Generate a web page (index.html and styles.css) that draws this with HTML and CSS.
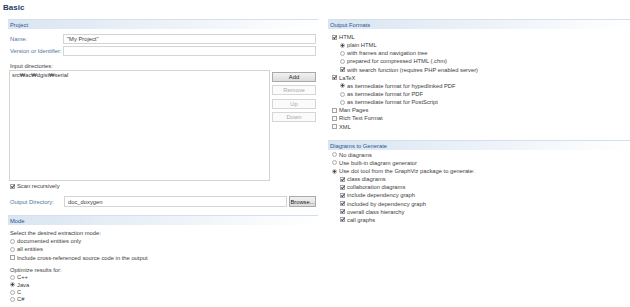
FILE: index.html
```html
<!DOCTYPE html>
<html lang="en">
<head>
    <meta charset="UTF-8">
    <meta name="viewport" content="width=device-width, initial-scale=1.0">
    <title>Doxygen - Basic</title>
    <link rel="stylesheet" href="styles.css">
</head>
<body>
    <h1 class="page-title">Basic</h1>

    <div class="columns">
        <div class="col">
            <section class="group">
                <div class="group-title">Project</div>
                <div class="field first">
                    <label class="field-label">Name:</label>
                    <input class="text-input" type="text" value="&quot;My Project&quot;">
                </div>
                <div class="field">
                    <label class="field-label">Version or Identifier:</label>
                    <input class="text-input" type="text" value="">
                </div>

                <div class="plain-label dirs-label">Input directories:</div>
                <div class="dirs">
                    <div class="dir-list">src₩ac₩dgist₩serial</div>
                    <div class="dir-buttons">
                        <button class="btn">Add</button>
                        <button class="btn" disabled>Remove</button>
                        <button class="btn btn-gap" disabled>Up</button>
                        <button class="btn" disabled>Down</button>
                    </div>
                </div>
                <div class="opt scan"><span class="box on"></span>Scan recursively</div>

                <div class="field out-dir">
                    <label class="field-label">Output Directory:</label>
                    <input class="text-input" type="text" value="doc_doxygen">
                    <button class="btn browse">Browse...</button>
                </div>
            </section>

            <section class="group mode">
                <div class="group-title">Mode</div>
                <div class="opt">Select the desired extraction mode:</div>
                <div class="opt"><span class="radio"></span>documented entities only</div>
                <div class="opt"><span class="radio"></span>all entities</div>
                <div class="opt"><span class="box"></span>Include cross-referenced source code in the output</div>
                <div class="opt optimize">Optimize results for:</div>
                <div class="opt tight"><span class="radio"></span>C++</div>
                <div class="opt tight"><span class="radio on"></span>Java</div>
                <div class="opt tight"><span class="radio"></span>C</div>
                <div class="opt tight"><span class="radio"></span>C#</div>
            </section>
        </div>

        <div class="col">
            <section class="group">
                <div class="group-title">Output Formats</div>
                <div class="list">
                    <div class="opt"><span class="box on"></span>HTML</div>
                    <div class="opt sub"><span class="radio on"></span>plain HTML</div>
                    <div class="opt sub"><span class="radio"></span>with frames and navigation tree</div>
                    <div class="opt sub"><span class="radio"></span>prepared for compressed HTML (.chm)</div>
                    <div class="opt sub"><span class="box on"></span>with search function (requires PHP enabled server)</div>
                    <div class="opt"><span class="box on"></span>LaTeX</div>
                    <div class="opt sub"><span class="radio on"></span>as itermediate format for hypedlinked PDF</div>
                    <div class="opt sub"><span class="radio"></span>as itermediate format for PDF</div>
                    <div class="opt sub"><span class="radio"></span>as itermediate format for PostScript</div>
                    <div class="opt"><span class="box"></span>Man Pages</div>
                    <div class="opt"><span class="box"></span>Rich Text Format</div>
                    <div class="opt"><span class="box"></span>XML</div>
                </div>
            </section>

            <section class="group diagrams">
                <div class="group-title">Diagrams to Generate</div>
                <div class="list">
                    <div class="opt"><span class="radio"></span>No diagrams</div>
                    <div class="opt"><span class="radio"></span>Use built-in diagram generator</div>
                    <div class="opt"><span class="radio on"></span>Use dot tool from the GraphViz package to generate:</div>
                    <div class="opt sub"><span class="box on"></span>class diagrams</div>
                    <div class="opt sub"><span class="box on"></span>collaboration diagrams</div>
                    <div class="opt sub"><span class="box on"></span>include dependency graph</div>
                    <div class="opt sub"><span class="box on"></span>included by dependency graph</div>
                    <div class="opt sub"><span class="box on"></span>overall class hierarchy</div>
                    <div class="opt sub"><span class="box on"></span>call graphs</div>
                </div>
            </section>
        </div>
    </div>
</body>
</html>
```

FILE: styles.css
```css
body {
    margin: 0;
    background: #fff;
    font-family: "Liberation Sans", Arial, sans-serif;
    font-size: 5.8px;
    color: #3c3c3c;
}
.page-title {
    margin: 0;
    height: 19px;
    padding: 3px 0 0 3px;
    box-sizing: border-box;
    font-size: 8px;
    line-height: 10px;
    color: #1f3c66;
}
.columns {
    display: grid;
    grid-template-columns: 310px 302px;
    gap: 10px;
    padding-left: 8px;
}
.group-title {
    height: 9px;
    line-height: 10px;
    padding-left: 2px;
    color: #2a5590;
    border-top: 1px solid #d3dfec;
    background: linear-gradient(to right, #d9e5f1, #eef3f9 55%, #fff);
}
.field {
    display: flex;
    align-items: center;
    margin-top: 2px;
    padding: 0 2px;
}
.field.first {
    margin-top: 5px;
}
.field-label {
    flex: none;
    width: 53px;
    white-space: nowrap;
    color: #4e72a4;
}
.text-input {
    flex: 1;
    min-width: 0;
    height: 10px;
    box-sizing: border-box;
    margin: 0;
    padding: 0 3px;
    border: 1px solid #d4d4d4;
    font: inherit;
    color: #3c3c3c;
    background: #fff;
}
.plain-label {
    padding-left: 2px;
    line-height: 8px;
}
.dirs-label {
    margin-top: 6px;
}
.dirs {
    display: flex;
    gap: 2px;
    padding-left: 1px;
}
.dir-list {
    width: 261px;
    height: 111px;
    box-sizing: border-box;
    border: 1px solid #d4d4d4;
    padding: 1px 2px;
    line-height: 7px;
}
.dir-buttons {
    display: flex;
    flex-direction: column;
    gap: 3px;
    padding-top: 2px;
}
.btn {
    flex: none;
    width: 44px;
    height: 10px;
    margin: 0;
    padding: 0;
    font: inherit;
    line-height: 8px;
    color: #222;
    border: 1px solid #a9a9a9;
    background: linear-gradient(#f2f2f2, #dcdcdc);
}
.btn:disabled {
    color: #a8a8a8;
    border-color: #d6d6d6;
    background: #fbfbfb;
}
.btn-gap {
    margin-top: 1px;
}
.opt {
    display: flex;
    align-items: center;
    height: 8.15px;
    padding-left: 2px;
    white-space: nowrap;
}
.scan {
    margin-top: 1px;
}
.out-dir {
    margin-top: 6px;
}
.out-dir .field-label {
    width: 54px;
}
.out-dir .text-input {
    height: 11px;
}
.browse {
    width: 27px;
    height: 11px;
    margin-left: 2px;
}
.mode {
    margin-top: 8px;
}
.mode .group-title {
    margin-bottom: 4px;
}
.optimize {
    margin-top: 4px;
}
.tight {
    height: 7.3px;
}
.list {
    padding-top: 4px;
    padding-left: 2px;
}
.sub {
    padding-left: 10px;
}
.diagrams {
    margin-top: 9px;
}
.diagrams .list {
    padding-top: 1px;
}
.box,
.radio {
    flex: none;
    position: relative;
    width: 5px;
    height: 5px;
    margin-right: 2px;
    box-sizing: border-box;
    border: 1px solid #a4a4a4;
    background: #fafafa;
}
.radio {
    border-radius: 50%;
    border-color: #b0b0b0;
}
.radio.on {
    background: radial-gradient(circle, #2f3a4a 45%, #f6f6f6 60%);
}
.box.on::after {
    content: "";
    position: absolute;
    left: 1px;
    top: -1px;
    width: 1px;
    height: 3px;
    border-right: 1px solid #3d4b62;
    border-bottom: 1px solid #3d4b62;
    transform: rotate(40deg);
}
```
